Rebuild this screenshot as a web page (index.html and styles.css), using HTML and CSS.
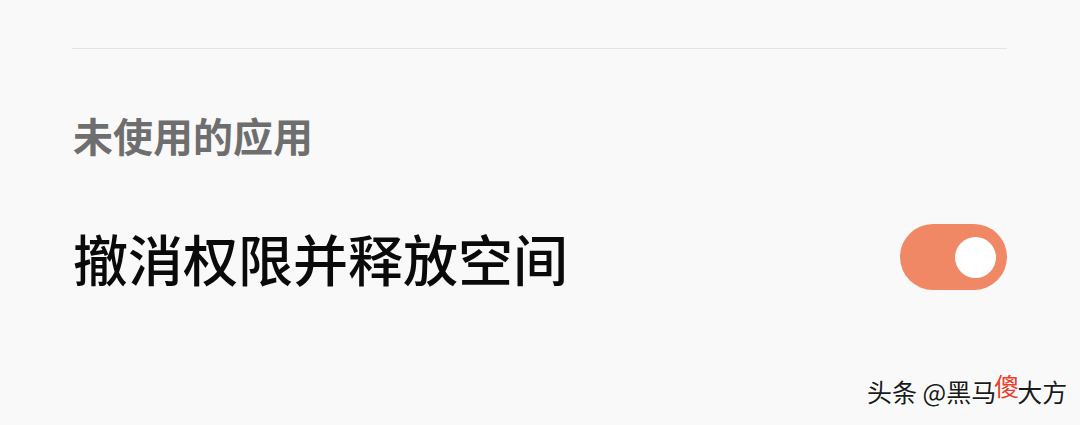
FILE: index.html
```html
<!DOCTYPE html>
<html lang="zh-CN">
<head>
<meta charset="utf-8">
<link rel="stylesheet" href="styles.css">
</head>
<body>
<div class="page">
  <div class="divider"></div>
  <div class="section-title">未使用的应用</div>
  <div class="row">
    <div class="row-label">撤消权限并释放空间</div>
    <div class="toggle"><div class="knob"></div></div>
  </div>
</div>
<div class="watermark"><span>头条 @黑马</span><span class="wm-red">傻</span><span class="wm-tail">大方</span></div>
</body>
</html>
```
FILE: styles.css
```css
html, body {
  margin: 0;
  padding: 0;
}
body {
  width: 1080px;
  height: 425px;
  background: #f9f9f9;
  font-family: "Noto Sans CJK SC", "Noto Sans", sans-serif;
  position: relative;
  overflow: hidden;
}
.page {
  padding: 48px 73px 0 72px;
}
.divider {
  height: 1px;
  background: #e4e4e4;
}
.section-title {
  margin-top: 61px;
  font-size: 40px;
  line-height: 50px;
  font-weight: 700;
  color: #6e6e6e;
  padding-left: 1px;
}
.row {
  margin-top: 64px;
  display: flex;
  align-items: center;
  justify-content: space-between;
}
.row-label {
  font-size: 55px;
  line-height: 66px;
  font-weight: 500;
  color: #0a0a0a;
  padding-left: 1px;
}
.toggle {
  width: 107px;
  height: 66px;
  border-radius: 33px;
  background: #f08865;
  display: flex;
  align-items: center;
  justify-content: flex-end;
  padding-right: 11px;
  box-sizing: border-box;
}
.knob {
  width: 41px;
  height: 41px;
  border-radius: 50%;
  background: #ffffff;
}
.watermark {
  position: absolute;
  left: 867px;
  top: 374px;
  font-size: 25px;
  line-height: 34px;
  color: #1a1a1a;
  white-space: nowrap;
  text-shadow: 1px 1px 0 #ffffff, -1px -1px 0 #ffffff;
}
.wm-red {
  display: inline-block;
  color: #e8402a;
  margin-left: -2px;
  transform: translateY(-6px);
}
.wm-tail {
  display: inline-block;
  margin-left: -2px;
}
```
